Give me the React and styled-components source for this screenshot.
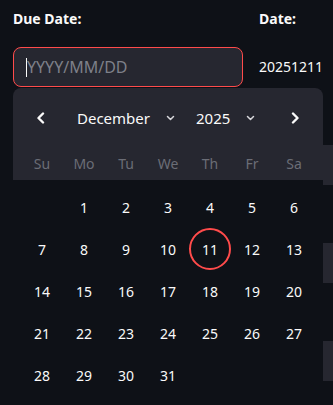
import styled, { createGlobalStyle } from "styled-components";

const GlobalStyle = createGlobalStyle`
  * { box-sizing: border-box; }
  body {
    margin: 0;
    background: #0e1117;
    font-family: "Noto Sans", "Open Sans", sans-serif;
    color: #fafafa;
  }
`;

const weekdays = ["Su", "Mo", "Tu", "We", "Th", "Fr", "Sa"];
const selected = 11;

function buildDays() {
  const cells = [null];
  for (let d = 1; d <= 31; d++) cells.push(d);
  while (cells.length % 7) cells.push(null);
  const rows = [];
  for (let i = 0; i < cells.length; i += 7) rows.push(cells.slice(i, i + 7));
  return rows;
}

export default function App() {
  const rows = buildDays();
  return (
    <>
      <GlobalStyle />
      <Page>
        <Field>
          <Label>Due Date:</Label>
          <Input>
            <Caret />
            <Placeholder>YYYY/MM/DD</Placeholder>
          </Input>
          <Popover>
            <Header>
              <Nav>
                <NavButton>
                  <svg width="10" height="12" viewBox="0 0 10 12">
                    <path d="M7 1.5 L2.5 6 L7 10.5" fill="none" stroke="#fafafa" strokeWidth="2.4" strokeLinecap="round" strokeLinejoin="round" />
                  </svg>
                </NavButton>
                <Select $width={115} $pad={8}>
                  <span>December</span>
                  <DownChevron />
                </Select>
                <Select $width={83} $pad={12}>
                  <span>2025</span>
                  <DownChevron />
                </Select>
                <NavButton>
                  <svg width="10" height="12" viewBox="0 0 10 12">
                    <path d="M3 1.5 L7.5 6 L3 10.5" fill="none" stroke="#fafafa" strokeWidth="2.4" strokeLinecap="round" strokeLinejoin="round" />
                  </svg>
                </NavButton>
              </Nav>
              <WeekRow>
                {weekdays.map(w => <WeekDay key={w}>{w}</WeekDay>)}
              </WeekRow>
            </Header>
            <Body>
              {rows.map((r, i) => (
                <DayRow key={i}>
                  {r.map((d, j) => (
                    <Day key={j} $selected={d === selected}>{d}</Day>
                  ))}
                </DayRow>
              ))}
            </Body>
          </Popover>
        </Field>
        <Side>
          <Label>Date:</Label>
          <Value>20251211</Value>
          <Behind>
            <GhostInput />
            <GhostInput />
            <GhostInput />
          </Behind>
        </Side>
      </Page>
    </>
  );
}

function DownChevron() {
  return (
    <Chev width="9" height="6" viewBox="0 0 9 6">
      <path d="M1.5 1.5 L4.5 4.5 L7.5 1.5" fill="none" stroke="#d8d8dc" strokeWidth="1.5" strokeLinecap="round" strokeLinejoin="round" />
    </Chev>
  );
}

const Page = styled.div`
  display: grid;
  grid-template-columns: 230px 1fr;
  column-gap: 16px;
  padding: 8px 0 0 13px;
  height: 405px;
  overflow: hidden;
`;

const Field = styled.div`
  position: relative;
  z-index: 2;
`;

const Label = styled.div`
  font-size: 14px;
  font-weight: 700;
  line-height: 22px;
  margin-bottom: 17px;
  color: #fafafa;
`;

const Input = styled.div`
  height: 40px;
  background: #262730;
  border: 1px solid #ff4b4b;
  border-radius: 8px;
  display: flex;
  align-items: center;
  padding-left: 12px;
`;

const Caret = styled.span`
  width: 1px;
  height: 19px;
  background: #fafafa;
`;

const Placeholder = styled.span`
  font-size: 16px;
  color: #7e8089;
`;

const Popover = styled.div`
  position: absolute;
  left: 0;
  top: 80px;
  width: 310px;
  border-radius: 8px 8px 0 0;
  overflow: hidden;
  background: #0e1117;
`;

const Header = styled.div`
  background: #262730;
  padding: 0 8px;
`;

const Nav = styled.div`
  height: 60px;
  display: flex;
  align-items: center;
  margin: 0 -8px;
`;

const NavButton = styled.div`
  width: 56px;
  height: 40px;
  display: flex;
  align-items: center;
  justify-content: center;
`;

const Select = styled.div`
  width: ${p => p.$width}px;
  padding-left: ${p => p.$pad}px;
  display: flex;
  align-items: center;
  gap: 16px;
  font-size: 15px;
  color: #fafafa;
`;

const Chev = styled.svg`
  flex: none;
`;

const WeekRow = styled.div`
  height: 32px;
  display: grid;
  grid-template-columns: repeat(7, 42px);
  align-items: center;
  padding-bottom: 2px;
`;

const WeekDay = styled.div`
  text-align: center;
  font-size: 14px;
  color: #6b6d76;
`;

const Body = styled.div`
  padding: 6px 8px 0;
`;

const DayRow = styled.div`
  display: grid;
  grid-template-columns: repeat(7, 42px);
  height: 42px;
`;

const Day = styled.div`
  display: flex;
  align-items: center;
  justify-content: center;
  font-size: 14px;
  color: #fafafa;
  position: relative;
  &::after {
    content: "";
    display: ${p => (p.$selected ? "block" : "none")};
    position: absolute;
    left: 0;
    top: 0;
    width: 42px;
    height: 42px;
    border: 2px solid #ff4b4b;
    border-radius: 50%;
    box-sizing: border-box;
  }
`;

const Side = styled.div`
  display: flex;
  flex-direction: column;
`;

const Value = styled.div`
  height: 40px;
  line-height: 40px;
  font-size: 14px;
  color: #fafafa;
`;

const Behind = styled.div`
  display: flex;
  flex-direction: column;
  gap: 58px;
  padding-top: 58px;
  margin-left: 64px;
`;

const GhostInput = styled.div`
  width: 60px;
  height: 40px;
  background: #262730;
`;
